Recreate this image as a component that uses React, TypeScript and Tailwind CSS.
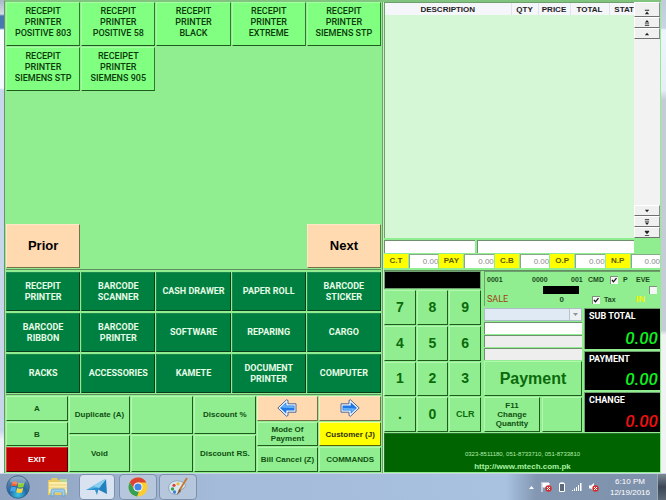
import React from "react";

const sans = "font-['Liberation_Sans',Arial,sans-serif]";
const roboto = "font-[Roboto,'Liberation_Sans',sans-serif]";

const bevel =
  "border border-t-[#b4f8b0] border-l-[#b4f8b0] border-r-[#1d5c1d] border-b-[#1d5c1d]";

const products = [
  "RECEPIT PRINTER POSITIVE 803",
  "RECEPIT PRINTER POSITIVE 58",
  "RECEPIT PRINTER BLACK",
  "RECEPIT PRINTER EXTREME",
  "RECEPIT PRINTER SIEMENS STP",
  "RECEPIT PRINTER SIEMENS STP",
  "RECEIPET PRINTER SIEMENS 905",
];

const categories = [
  "RECEPIT PRINTER",
  "BARCODE SCANNER",
  "CASH DRAWER",
  "PAPER ROLL",
  "BARCODE STICKER",
  "BARCODE RIBBON",
  "BARCODE PRINTER",
  "SOFTWARE",
  "REPARING",
  "CARGO",
  "RACKS",
  "ACCESSORIES",
  "KAMETE",
  "DOCUMENT PRINTER",
  "COMPUTER",
];

function splitProduct(name: string) {
  const [first, second, ...rest] = name.split(" ");
  return [first, second, rest.join(" ")];
}

function Products() {
  return (
    <section className="flex flex-1 flex-col border-b border-[#5f8f5f] pb-px">
      <div className="grid auto-rows-[44px] grid-cols-5 gap-px">
        {products.map((name, i) => (
          <button
            key={i}
            className={`flex flex-col items-center border border-t-[#a4ffa0] border-l-[#a4ffa0] border-r-[#2c7a2c] border-b-[#1d5c1d] bg-[#80ff80] pt-[3px] text-[9px] leading-[11px] font-medium text-[#0b3a0b] ${roboto}`}
          >
            {splitProduct(name).map((line) => (
              <span key={line} className="whitespace-nowrap">{line}</span>
            ))}
          </button>
        ))}
      </div>
      <div className="mt-auto grid grid-cols-5 gap-px">
        <button className={`h-11 border border-t-[#ffe8c8] border-l-[#ffe8c8] border-r-[#7a7048] border-b-[#7a7048] bg-[#ffdab0] text-[13px] font-bold ${sans}`}>
          Prior
        </button>
        <button className={`col-start-5 h-11 border border-t-[#ffe8c8] border-l-[#ffe8c8] border-r-[#7a7048] border-b-[#7a7048] bg-[#ffdab0] text-[13px] font-bold ${sans}`}>
          Next
        </button>
      </div>
    </section>
  );
}

function Categories() {
  return (
    <section className="grid auto-rows-[39px] grid-cols-5 gap-x-px gap-y-[2px] border-b border-[#5f8f5f] pt-[2px] pb-px">
      {categories.map((name, i) => (
        <button
          key={i}
          className={`border border-t-[#1c8a4c] border-l-[#1c8a4c] border-r-[#0a3c1c] border-b-[#0a3c1c] bg-[#008040] px-[2px] text-[9px] leading-[11px] font-bold text-[#e6fbe6] ${roboto}`}
        >
          <span className={name.includes(" ") && !/CASH|PAPER/.test(name) ? "mx-auto block w-min" : "block whitespace-nowrap"}>
            {name}
          </span>
        </button>
      ))}
    </section>
  );
}

function ArrowIcon({ flip = false }: { flip?: boolean }) {
  return (
    <svg viewBox="0 0 20 18" className={flip ? "h-[18px] w-5 rotate-180" : "h-[18px] w-5"} aria-hidden="true">
      <path d="M.8 9 9.500 .8 11 1.500V4.800H19V13.200H11V16.500L9.500 17.200Z" fill="#f4f8ff" stroke="#52648c" strokeWidth="1" strokeLinejoin="round" />
      <path d="M3 9 9.300 3.200V6.500H17.500V11.500H9.300V14.800Z" fill="#1f78e4" />
      <path d="M4.200 8.600 8.500 4.800V7.300H16.700V9Z" fill="#6cb8fc" />
    </svg>
  );
}

function Command({ label, className = "" }: { label?: string; className?: string }) {
  return (
    <button
      aria-label={label ? undefined : "Unassigned"}
      className={`min-h-0 flex-1 border px-0 text-[8px] leading-[9px] font-bold whitespace-nowrap ${sans} ${className || `border-t-[#b4f8b0] border-l-[#b4f8b0] border-r-[#1d5c1d] border-b-[#1d5c1d] bg-[#90ee90] text-[#105010]`}`}
    >
      {label}
    </button>
  );
}

function Commands() {
  const col = "flex min-w-0 flex-col gap-px";
  return (
    <section className="grid h-[78px] grid-cols-6 gap-px pt-px pb-px">
      <div className={col}>
        <Command label="A" />
        <Command label="B" />
        <Command label="EXIT" className="border-t-[#d84040] border-l-[#d84040] border-r-[#500000] border-b-[#500000] bg-[#c00000] text-white" />
      </div>
      <div className={col}>
        <Command label="Duplicate (A)" />
        <Command label="Void" />
      </div>
      <div className={col}>
        <Command />
        <Command />
      </div>
      <div className={col}>
        <Command label="Discount %" />
        <Command label="Discount RS." />
      </div>
      <div className={col}>
        <button aria-label="Previous" className="flex min-h-0 flex-1 items-center justify-center border border-t-[#ffe8c8] border-l-[#ffe8c8] border-r-[#7a7048] border-b-[#7a7048] bg-[#ffdab0]">
          <ArrowIcon />
        </button>
        <button className={`min-h-0 flex-1 px-2 text-[8px] leading-[9px] font-bold text-[#105010] ${bevel} ${sans}`}>
          Mode Of Payment
        </button>
        <Command label="Bill Cancel (Z)" />
      </div>
      <div className={col}>
        <button aria-label="Next" className="flex min-h-0 flex-1 items-center justify-center border border-t-[#ffe8c8] border-l-[#ffe8c8] border-r-[#7a7048] border-b-[#7a7048] bg-[#ffdab0]">
          <ArrowIcon flip />
        </button>
        <Command label="Customer (J)" className="border-t-[#ffff90] border-l-[#ffff90] border-r-[#606000] border-b-[#606000] bg-[#ffff00] text-[#303000]" />
        <Command label="COMMANDS" />
      </div>
    </section>
  );
}

function ScrollButton({ label, children, className }: { label: string; children: React.ReactNode; className: string }) {
  return (
    <button aria-label={label} className={`flex items-center justify-center border border-t-white border-l-white border-r-[#8a8a8a] border-b-[#707070] bg-[#f0f0f0] ${className}`}>
      <svg viewBox="0 0 7 7" className="size-[6px]" fill="#222" aria-hidden="true">{children}</svg>
    </button>
  );
}

function SaleList() {
  return (
    <section className="flex min-h-0 flex-1">
      <div className="flex-1 border-t border-l border-[#6f9f6f] bg-[#d6f7d6]">
        <table className={`w-full table-fixed border-collapse text-[8px] leading-[9px] text-[#222] ${sans}`}>
          <thead>
            <tr className="h-3 bg-[#f4f6fa]">
              <th className="w-[126px] border-r border-[#dfe4ea] p-0">DESCRIPTION</th>
              <th className="w-[27px] border-r border-[#dfe4ea] p-0">QTY</th>
              <th className="w-8 border-r border-[#dfe4ea] p-0">PRICE</th>
              <th className="w-[39px] border-r border-[#dfe4ea] p-0">TOTAL</th>
              <th className="p-0 text-right">STAT</th>
            </tr>
          </thead>
        </table>
      </div>
      <div className="flex w-[26px] flex-col bg-[#f2f2f2]">
        <ScrollButton label="First" className="h-[15px] pt-1"><path d="M1 1h5v1H1zM3.500 3 6 6H1z" /></ScrollButton>
        <ScrollButton label="Page up" className="h-[11px]"><path d="M3.500 0 6 3H1zM1 4h5v1H1zM1 6h5v1H1z" /></ScrollButton>
        <ScrollButton label="Up" className="h-[11px]"><path d="M3.500 2 6 5H1z" /></ScrollButton>
        <div className="flex-1" />
        <ScrollButton label="Down" className="h-[11px]"><path d="M3.500 5 6 2H1z" /></ScrollButton>
        <ScrollButton label="Page down" className="h-[11px]"><path d="M3.500 7 6 4H1zM1 2h5v1H1zM1 0h5v1H1z" /></ScrollButton>
        <ScrollButton label="Last" className="h-[11px]"><path d="M1 6h5v1H1zM3.500 5 6 2H1zM1 1h5v1H1z" /></ScrollButton>
      </div>
    </section>
  );
}

function Totals() {
  return (
    <section className="flex h-[14px] gap-px">
      {["C.T", "PAY", "C.B", "O.P", "N.P"].map((name) => (
        <label key={name} className={`flex min-w-0 flex-1 gap-px text-[8px] ${sans}`}>
          <span className="flex w-6 items-center justify-center bg-[#ffff00] font-bold text-[#5c5c00]">{name}</span>
          <input defaultValue="0.00" className="min-w-0 flex-1 border-t border-l border-[#8aa88a] bg-white text-right text-[8px] text-[#8c8c8c] outline-none" />
        </label>
      ))}
    </section>
  );
}

function Keypad() {
  return (
    <section className="flex w-[97px] flex-col">
      <input aria-label="Entry" className="h-[18px] w-full border border-[#6f9f6f] bg-black text-white outline-none" />
      <div className="mt-px grid flex-1 grid-cols-3 grid-rows-4 gap-px">
        {["7", "8", "9", "4", "5", "6", "1", "2", "3", ".", "0", "CLR"].map((k) => (
          <button
            key={k}
            className={`bg-[#90ee90] font-bold text-[#0c6a0c] ${bevel} ${sans} ${k === "CLR" ? "text-[9px]" : "text-[14px]"}`}
          >
            {k}
          </button>
        ))}
      </div>
    </section>
  );
}

function CheckBox({ label, checked = false }: { label: string; checked?: boolean }) {
  return (
    <span className="grid size-[8px] shrink-0">
      <input
        type="checkbox"
        aria-label={label}
        defaultChecked={checked}
        className="peer col-start-1 row-start-1 size-[8px] appearance-none border-t border-l border-[#7d927d] bg-[#f6f6f6]"
      />
      <svg viewBox="0 0 8 8" className="pointer-events-none col-start-1 row-start-1 hidden size-[8px] peer-checked:block" aria-hidden="true">
        <path d="M2 4 3.500 5.800 6.500 2.200" fill="none" stroke="#111" strokeWidth="1.300" />
      </svg>
    </span>
  );
}

function Status() {
  return (
    <section className={`grid h-[35px] grid-cols-[45px_39px_17px_22px_13px_13px_1fr] grid-rows-[11px_9px_11px] items-center border-t border-l border-[#6f9f6f] pt-[2px] pl-[2px] text-[7px] leading-[9px] font-bold text-[#1c4a1c] ${sans}`}>
      <span>0001</span>
      <span>0000</span>
      <span>001</span>
      <span>CMD</span>
      <CheckBox label="CMD" checked />
      <span>P</span>
      <span>EVE</span>
      <span className="col-span-2 col-start-2 ml-[11px] h-2 w-9 bg-black" />
      <span className="col-start-7 ml-[13px]"><CheckBox label="EVE" /></span>
      <span className={`col-start-1 text-[9px] font-normal text-[#a04010] ${roboto}`}>SALE</span>
      <span className="mr-[7px] text-right text-[8px]">0</span>
      <span className="col-span-3 col-start-4 ml-1 flex items-center gap-1">
        <CheckBox label="Tax" checked />
        Tax
      </span>
      <span className="text-[9px] text-[#f4f400]">IN</span>
    </section>
  );
}

function Amount({ label, tone, className }: { label: string; tone: string; className: string }) {
  return (
    <div className={`flex flex-col justify-between border-t border-l border-[#6f9f6f] bg-black ${className}`}>
      <span className={`pt-[2px] pl-1 text-[9px] leading-[11px] font-bold text-white ${roboto}`}>{label}</span>
      <span className={`pr-[2px] pb-px text-right text-[17px] leading-[20px] font-medium italic ${tone} ${roboto}`}>0.00</span>
    </div>
  );
}

function Checkout() {
  const field = "h-[12px] w-full border-t border-l border-[#6f8f6f] outline-none";
  return (
    <section className="flex min-w-0 flex-1 flex-col gap-[2px]">
      <Status />
      <div className="flex min-h-0 flex-1 gap-[2px]">
        <div className="flex min-w-0 flex-1 flex-col gap-px">
          <span className="grid h-[13px] grid-cols-[1fr_12px] grid-rows-[11px] border border-[#a9bfc4] bg-[#dfeaf4]">
            <select aria-label="Customer" className="col-span-2 col-start-1 row-start-1 h-[11px] w-full appearance-none outline-none">
              <option></option>
            </select>
            <span className="pointer-events-none col-start-2 row-start-1 flex items-center justify-center border-l border-[#b8c4cc] bg-[#edf1f4]">
              <svg viewBox="0 0 5 3" className="h-[3px] w-[5px]" fill="#8a949c" aria-hidden="true"><path d="M0 0h5L2.500 3z" /></svg>
            </span>
          </span>
          <input aria-label="Name" className={`${field} bg-white`} />
          <input aria-label="Address" className={`${field} bg-[#eeeeee]`} />
          <input aria-label="Phone" className={`${field} bg-[#eeeeee]`} />
          <button className={`min-h-0 flex-1 text-[16px] font-bold text-[#0c6a0c] ${bevel} ${sans}`}>Payment</button>
          <div className="flex h-[35px] gap-[2px]">
            <button className={`w-14 px-2 text-[8px] leading-[9px] font-bold text-[#105010] ${bevel} ${sans}`}>F11 Change Quantity</button>
            <button aria-label="Unassigned" className={`flex-1 ${bevel}`} />
          </div>
        </div>
        <div className="flex w-[76px] flex-col gap-[2px]">
          <Amount label="SUB TOTAL" tone="text-[#10f020]" className="flex-[41]" />
          <Amount label="PAYMENT" tone="text-[#10f020]" className="flex-[39]" />
          <Amount label="CHANGE" tone="text-[#f01010]" className="flex-[40]" />
        </div>
      </div>
    </section>
  );
}

function StartOrb() {
  return (
    <svg viewBox="0 0 24 24" className="size-6" aria-hidden="true">
      <defs>
        <radialGradient id="orb" cx="50%" cy="85%" r="80%">
          <stop offset="0" stopColor="#3cc4e4" />
          <stop offset=".5" stopColor="#2467a0" />
          <stop offset="1" stopColor="#6c90b4" />
        </radialGradient>
      </defs>
      <circle cx="12" cy="12" r="11.300" fill="url(#orb)" stroke="#32557c" strokeWidth=".7" />
      <path d="M6 7.500Q9 5.500 11.500 7L10.500 11.500Q8 10 5 11.500Z" fill="#f0622c" />
      <path d="M12.500 7.500Q15.500 9 18.500 7.500L17.500 12Q14.500 13 11.500 12Z" fill="#8ecc38" />
      <path d="M4.800 12.500Q7.500 11 10.200 12.500L9.200 17Q6.500 15.500 4 16.500Z" fill="#44a4ec" />
      <path d="M11.200 13Q14 14.500 17.200 13L16 17.500Q13 18.500 10.200 17.300Z" fill="#fcd440" />
      <ellipse cx="12" cy="5.500" rx="8" ry="4" fill="#fff" opacity=".25" />
    </svg>
  );
}

function ExplorerIcon() {
  return (
    <svg viewBox="0 0 22 20" className="h-5 w-[22px]" aria-hidden="true">
      <path d="M1 3h3l1-2h5l1 2h9v15H1z" fill="#e8c860" />
      <path d="M2 5h18v11H2z" fill="#fcedaa" />
      <path d="M13 2h7v3h-7z" fill="#b5d69c" />
      <path d="M2 8h18M2 11h18" stroke="#e8ce78" />
      <path d="M4 19v-5q0-2 2-2h10q2 0 2 2v5h-3v-4H7v4z" fill="#9cd0ee" stroke="#5c9cc8" strokeWidth=".7" />
    </svg>
  );
}

function BirdIcon() {
  return (
    <svg viewBox="0 0 22 18" className="h-[18px] w-[22px]" aria-hidden="true">
      <path d="M0 12 19 1 12 12Z" fill="#58b4e4" />
      <path d="M20 1 21 16 12 11.500Z" fill="#2180c0" />
      <path d="M0 12 13 9 11 17 9 12Z" fill="#2c90cc" />
      <path d="M7 8 20 1 13 10Z" fill="#8ad0f0" />
    </svg>
  );
}

function ChromeIcon() {
  return (
    <svg viewBox="0 0 20 20" className="size-5" aria-hidden="true">
      <circle cx="10" cy="10" r="9.500" fill="#fccc30" />
      <path d="M1.800 5.200A9.500 9.500 0 0 1 18.300 5.500H10L6 12Z" fill="#dc4434" />
      <path d="M1.800 5.200 6 12.200Q7.500 14.500 11 14.500L9 19.500A9.500 9.500 0 0 1 1.800 5.200Z" fill="#35a058" />
      <circle cx="10" cy="10" r="4.600" fill="#fff" />
      <circle cx="10" cy="10" r="3.600" fill="#4486e8" />
    </svg>
  );
}

function PaintIcon() {
  return (
    <svg viewBox="0 0 22 20" className="h-5 w-[22px]" aria-hidden="true">
      <path d="M2 13C0 7 6 3 12 4S20 9 17 11 13 12 13 15 4 19 2 13Z" fill="#d8e8f2" stroke="#8098ac" strokeWidth=".8" />
      <circle cx="5.500" cy="12" r="1.700" fill="#3ca048" />
      <circle cx="7" cy="8.300" r="1.600" fill="#e04430" />
      <circle cx="11" cy="6.800" r="1.600" fill="#f4b430" />
      <circle cx="7.500" cy="15" r="1.700" fill="#4080d0" />
      <path d="M20 1 12 14" stroke="#c87830" strokeWidth="1.800" />
      <path d="M12.500 12 9.500 18 14 14Z" fill="#805028" />
    </svg>
  );
}

function Taskbar() {
  const task = "flex h-[26px] items-center justify-center rounded-sm border border-[#7c90ac]";
  return (
    <footer className="flex h-[27px] items-center border-t border-[#c8d4e2] bg-[linear-gradient(90deg,#8fa3c0_0,#a4bbd9_220px,#a8c2e0_calc(100%-160px),#8397b2_calc(100%-130px),#7d90aa_100%)]">
      <button aria-label="Start" className="ml-[6px]"><StartOrb /></button>
      <button aria-label="Explorer" className="ml-[17px]"><ExplorerIcon /></button>
      <button aria-label="POS" className={`ml-[10px] w-9 bg-[#d8e2f0] ${task}`}><BirdIcon /></button>
      <button aria-label="Chrome" className={`ml-1 w-[38px] bg-[#b6c6dc] ${task}`}><ChromeIcon /></button>
      <button aria-label="Paint" className={`ml-[2px] w-[38px] bg-[#b6c6dc] ${task}`}><PaintIcon /></button>
      <div className="ml-auto flex items-center gap-[6px]">
        <svg viewBox="0 0 5 3" className="mr-px h-[3px] w-[5px]" fill="#fff" aria-hidden="true"><path d="M0 3h5L2.500 0z" /></svg>
        <svg viewBox="0 0 11 10" className="h-[10px] w-[11px]" aria-hidden="true">
          <path d="M1 0v10M2 1h6v4H2z" fill="#fff" stroke="#fff" strokeWidth="1" />
          <circle cx="7.500" cy="6.500" r="3.200" fill="#d03030" />
          <path d="m6 5 3 3m0-3-3 3" stroke="#fff" strokeWidth="1" />
        </svg>
        <svg viewBox="0 0 8 10" className="h-[10px] w-2" aria-hidden="true">
          <path d="M1.500 1.500h5v8h-5zM3 0h2v1.500H3z" fill="#5c6a7c" stroke="#fff" strokeWidth="1" />
        </svg>
        <svg viewBox="0 0 10 8" className="h-2 w-[10px]" fill="#fff" aria-hidden="true">
          <path d="M0 7h1v1H0zM2 5.500h1V8H2zM4 4h1v4H4zM6 2h1v6H6zM8 0h1.500v8H8z" />
        </svg>
        <svg viewBox="0 0 11 10" className="h-[10px] w-[11px]" aria-hidden="true">
          <path d="M1 3.500h2L6 1v8L3 6.500H1z" fill="#fff" />
          <circle cx="7.500" cy="6.500" r="3.200" fill="#d03030" />
          <path d="m6 5 3 3m0-3-3 3" stroke="#fff" strokeWidth="1" />
        </svg>
        <div className={`ml-[4px] w-[42px] text-center text-[8px] leading-[11px] text-white ${sans}`}>
          <div>6:10 PM</div>
          <div>12/19/2016</div>
        </div>
      </div>
      <button aria-label="Show desktop" className="ml-[6px] h-full w-[9px] border-l border-[#9aa8ba] bg-[linear-gradient(180deg,#7c8896,#3c4654_50%,#5c6876)]" />
    </footer>
  );
}

export default function App() {
  return (
    <div className="flex min-h-screen flex-col bg-[#c8d4e8]">
      <main className="flex flex-1">
        <div className="w-1 bg-[linear-gradient(180deg,#a8b8c8_0,#d4dce4_14px,#4878b0_16px,#4878b0_28px,#fafcff_30px,#f4f8ff_88px,#c8d8ec_90px,#c8d4ea_430px,#eef2f8_440px)]" />
        <div className="grid flex-1 grid-cols-[378fr_278fr] border-t-2 border-l border-t-[#80c480] border-l-[#6f8f6f] bg-[#90ee90]">
          <div className="flex min-w-0 flex-col border-r border-[#6f9f6f] pr-px pl-px">
            <Products />
            <Categories />
            <Commands />
          </div>
          <div className="flex min-w-0 flex-col border-l border-[#c0f8c0] pr-px">
            <SaleList />
            <div className="mt-[2px] mr-[26px] flex h-[13px] gap-[2px]">
              <input aria-label="Code" className="w-[91px] border-t border-l border-[#6f8f6f] bg-white outline-none" />
              <input aria-label="Item" className="min-w-0 flex-1 border-t border-l border-[#6f8f6f] bg-white outline-none" />
            </div>
            <div className="mt-px"><Totals /></div>
            <div className="mt-[2px] flex h-[162px] gap-[3px] border-t border-[#5f8f5f]">
              <Keypad />
              <Checkout />
            </div>
            <div className={`mt-px mb-px flex h-[39px] flex-col items-center gap-[3px] border-t border-l border-[#2c6c2c] bg-[#006400] pt-4 ${sans}`}>
              <span className="text-[6px] leading-[9px] text-[#b4ecac]">0323-8511180, 051-8733710, 051-8733810</span>
              <a href="http://www.mtech.com.pk" className="text-[8px] leading-[10px] font-bold text-[#a8f0a0]">http://www.mtech.com.pk</a>
            </div>
          </div>
        </div>
        <div className="w-[5px] bg-[linear-gradient(180deg,#c0ccd8_0,#c8d4e4_28px,#eef4fc_30px,#e8eef6_90px,#c4ccd6_100px,#c4ccd6_330px,#f0f2f4_335px)]" />
      </main>
      <Taskbar />
    </div>
  );
}
